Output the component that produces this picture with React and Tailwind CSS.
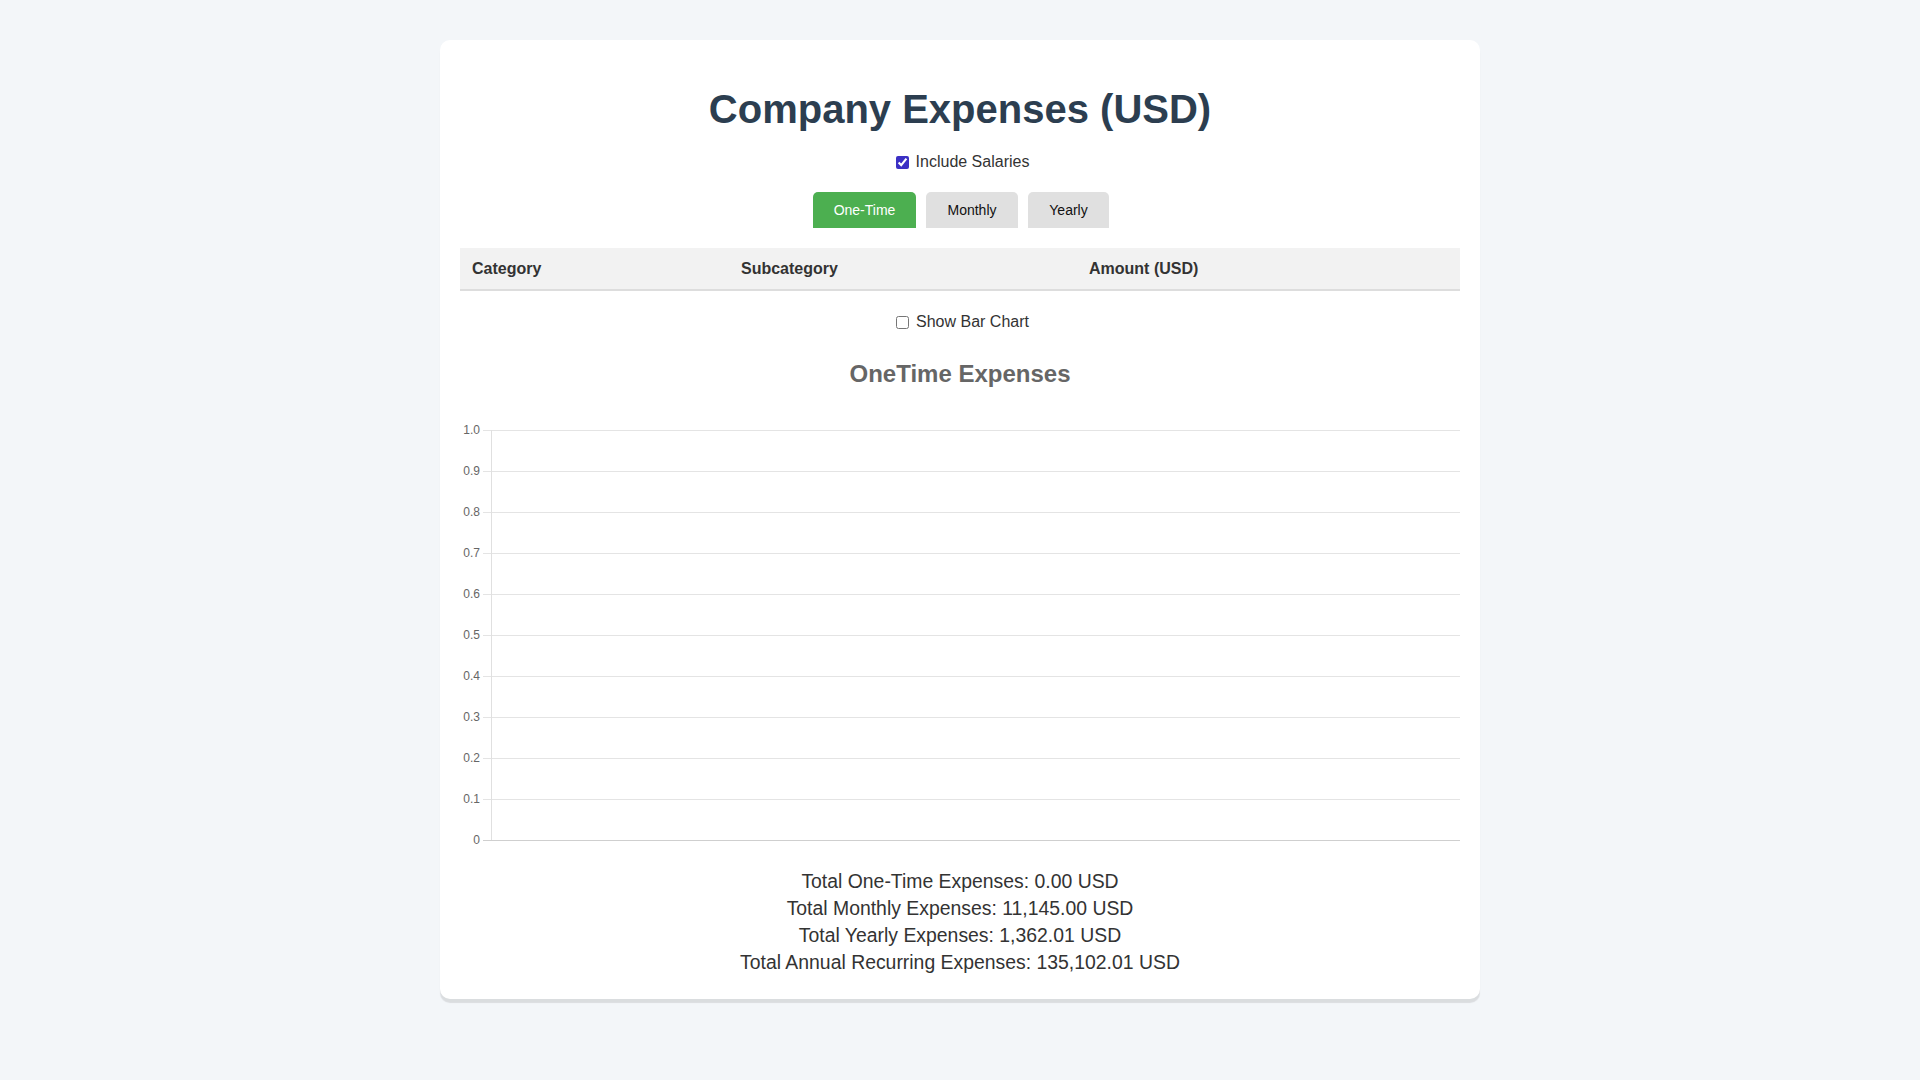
import React from "react";

const ticks = ["1.0", "0.9", "0.8", "0.7", "0.6", "0.5", "0.4", "0.3", "0.2", "0.1", "0"];

function Chart() {
  return (
    <svg width="1000" height="430" viewBox="0 0 1000 430" className="block">
      {ticks.map((t, i) => {
        const y = 10 + i * 41 + 0.5;
        const last = i === ticks.length - 1;
        return (
          <g key={t}>
            <line x1="23" y1={y} x2="1000" y2={y} stroke={last ? "#cfcfcf" : "#e4e4e4"} strokeWidth="1" />
            <text
              x="20"
              y={y}
              textAnchor="end"
              dominantBaseline="middle"
              fontSize="12"
              fill="#666"
              fontFamily="'Liberation Sans', Arial, sans-serif"
            >
              {t}
            </text>
          </g>
        );
      })}
      <line x1="31.5" y1="10" x2="31.5" y2="420" stroke="#e0e0e0" strokeWidth="1" />
    </svg>
  );
}

export default function App() {
  return (
    <div className="min-h-screen bg-[#f3f6f9] pt-[40px] pb-[40px] font-['Liberation_Sans',Arial,sans-serif]">
      <div className="mx-auto w-[1040px] rounded-[10px] bg-white px-[20px] pt-[20px] pb-[23px] shadow-[0_4px_1px_rgba(0,0,0,0.1)]">
        <h1 className="mt-[26px] text-center text-[40px] font-bold leading-[46px] text-[#2c3e50]">
          Company Expenses (USD)
        </h1>

        <div className="mt-[20px] flex h-[20px] items-center justify-center">
          <input
            type="checkbox"
            defaultChecked
            className="m-0 ml-[5px] mr-[7px] h-[13px] w-[13px] accent-[#3b30c4]"
          />
          <span className="text-[16px] text-[#333]">Include Salaries</span>
        </div>

        <div className="mt-[20px] flex justify-center gap-[10px] pl-[2px]">
          <button className="h-[36px] w-[103px] rounded-t-[5px] bg-[#4caf50] text-[14px] text-white">
            One-Time
          </button>
          <button className="h-[36px] w-[92px] rounded-t-[5px] bg-[#e0e0e0] text-[14px] text-[#111]">
            Monthly
          </button>
          <button className="h-[36px] w-[81px] rounded-t-[5px] bg-[#e0e0e0] text-[14px] text-[#111]">
            Yearly
          </button>
        </div>

        <table className="mt-[20px] w-full table-fixed border-collapse">
          <thead>
            <tr className="h-[42px] border-b-2 border-[#dddddd] bg-[#f2f2f2]">
              <th className="w-[269px] px-[12px] text-left text-[16px] font-bold text-[#333]">Category</th>
              <th className="w-[348px] px-[12px] text-left text-[16px] font-bold text-[#333]">Subcategory</th>
              <th className="px-[12px] text-left text-[16px] font-bold text-[#333]">Amount (USD)</th>
            </tr>
          </thead>
          <tbody></tbody>
        </table>

        <div className="mt-[21px] flex h-[20px] items-center justify-center">
          <input type="checkbox" className="m-0 ml-[5px] mr-[7px] h-[13px] w-[13px] accent-[#3b30c4]" />
          <span className="text-[16px] text-[#333]">Show Bar Chart</span>
        </div>

        <h2 className="mt-[28px] text-center text-[24px] font-bold leading-[28px] text-[#666]">
          OneTime Expenses
        </h2>

        <div className="mt-[32px]">
          <Chart />
        </div>

        <div className="mt-[18px] text-center text-[19.4px] leading-[27px] text-[#333]">
          <p>Total One-Time Expenses: 0.00 USD</p>
          <p>Total Monthly Expenses: 11,145.00 USD</p>
          <p>Total Yearly Expenses: 1,362.01 USD</p>
          <p>Total Annual Recurring Expenses: 135,102.01 USD</p>
        </div>
      </div>
    </div>
  );
}
